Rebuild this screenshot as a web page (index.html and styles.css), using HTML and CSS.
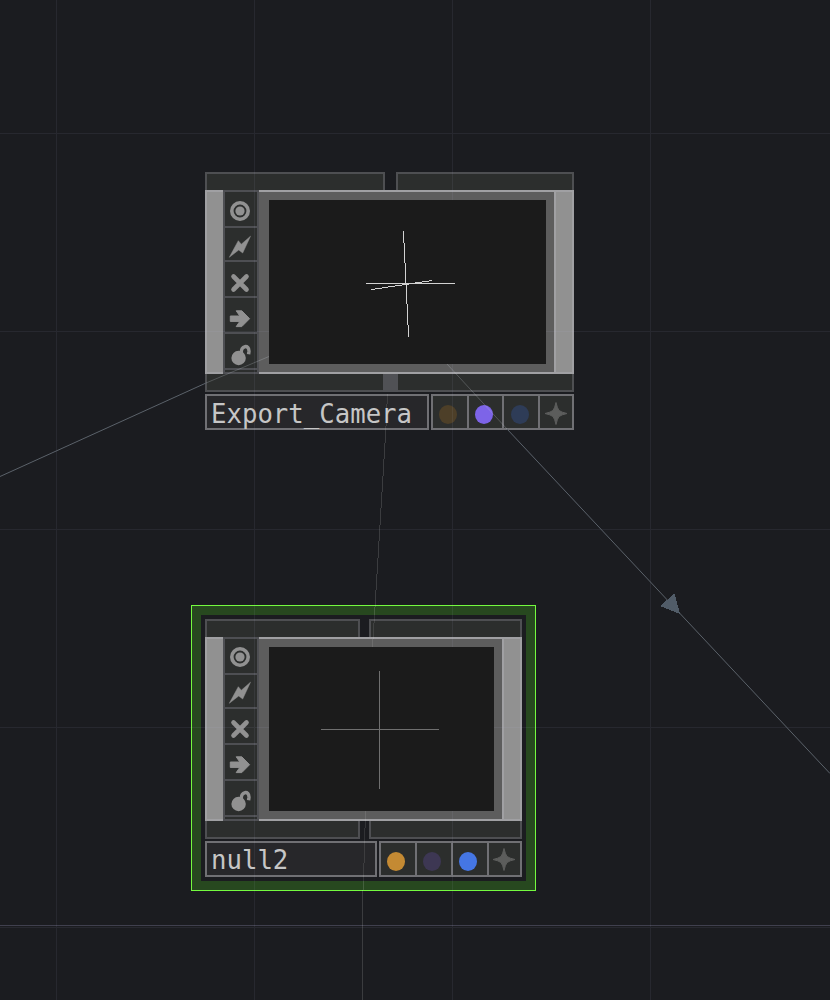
FILE: index.html
```html
<!DOCTYPE html>
<html lang="en">
<head>
<meta charset="utf-8">
<title>Network editor</title>
<link rel="stylesheet" href="styles.css">
</head>
<body>
<svg class="defs" width="0" height="0" aria-hidden="true">
  <symbol id="viewer" viewBox="0 0 32 34"><circle cx="15" cy="19" r="8.2" fill="none" stroke="currentColor" stroke-width="3.6"/><circle cx="15" cy="19" r="4.6" fill="currentColor"/></symbol>
  <symbol id="bolt" viewBox="0 0 32 32"><path d="M4.3 29.3 13.3 12.7 16.3 16.2 25.5 8.2 17.7 25 13.7 22Z" fill="currentColor" stroke="currentColor" stroke-width=".5" stroke-linejoin="round"/></symbol>
  <symbol id="cross" viewBox="0 0 32 34"><path d="M8.5 14.5 21.5 27.5M21.5 14.5 8.5 27.5" stroke="currentColor" stroke-width="4.6" stroke-linecap="round"/></symbol>
  <symbol id="arrow" viewBox="0 0 32 34"><path d="M5.3 18H14.8L11.2 12.8H16.8L24.6 20.7 16.8 28.6H11.2L14.8 23.4H5.3Z" fill="currentColor" stroke="currentColor" stroke-linejoin="round"/></symbol>
  <symbol id="unlock" viewBox="0 0 32 34"><circle cx="13.6" cy="24" r="7.2" fill="currentColor"/><path d="M16.4 19.5C15.2 11.2 24.4 10.4 24 17.2L23.6 20.2" fill="none" stroke="currentColor" stroke-width="3.5"/></symbol>
  <symbol id="star" viewBox="0 0 22 22"><path d="M11 0Q12.2 5.6 14 8Q16.5 9.8 22 11Q16.5 12.2 14 14Q12.2 16.4 11 22Q9.8 16.4 8 14Q5.5 12.2 0 11Q5.5 9.8 8 8Q9.8 5.6 11 0Z" fill="currentColor" stroke="currentColor" stroke-width="1"/></symbol>
</svg>
<main class="network">
  <section class="node node-camera">
    <div class="ports ports-in"><i></i><i></i></div>
    <div class="body">
      <div class="grip"></div>
      <div class="tools">
        <span><svg width="32" height="34"><use href="#viewer"/></svg></span>
        <span><svg width="32" height="32"><use href="#bolt"/></svg></span>
        <span><svg width="32" height="34"><use href="#cross"/></svg></span>
        <span><svg width="32" height="34"><use href="#arrow"/></svg></span>
        <span><svg width="32" height="34"><use href="#unlock"/></svg></span>
        <span></span>
      </div>
      <div class="frame"><svg class="screen" width="277" height="164"><path class="axis bright" d="M97 83.5H186M102.5 89.5 163.5 80.5M134.5 31V43M135.5 43V63M136.5 63V84M137.5 84V104M138.5 104V125M139.5 125V137"/></svg></div>
      <div class="grip grip-out"></div>
    </div>
    <div class="ports ports-out joined"><i></i><b></b><i></i></div>
    <div class="footer">
      <div class="name">Export_Camera</div>
      <div class="flags"><span><i class="dot brown"></i></span><span><i class="dot violet"></i></span><span><i class="dot navy"></i></span><span><svg class="star" width="22" height="23"><use href="#star"/></svg></span></div>
    </div>
  </section>

  <div class="selection">
    <section class="node node-null">
      <div class="ports ports-in"><i></i><i></i></div>
      <div class="body">
        <div class="grip"></div>
        <div class="tools raised">
          <span><svg width="32" height="34"><use href="#viewer"/></svg></span>
          <span><svg width="32" height="32"><use href="#bolt"/></svg></span>
          <span><svg width="32" height="34"><use href="#cross"/></svg></span>
          <span><svg width="32" height="34"><use href="#arrow"/></svg></span>
          <span><svg width="32" height="34"><use href="#unlock"/></svg></span>
          <span></span>
        </div>
        <div class="frame"><svg class="screen" width="225" height="164"><path class="axis" d="M52 82.5H170M110.5 24V142"/></svg></div>
        <div class="grip grip-out"></div>
      </div>
      <div class="ports ports-out"><i></i><i></i></div>
      <div class="footer raised">
        <div class="name">null2</div>
        <div class="flags"><span><i class="dot orange"></i></span><span><i class="dot plum"></i></span><span><i class="dot blue"></i></span><span><svg class="star" width="22" height="23"><use href="#star"/></svg></span></div>
      </div>
    </section>
  </div>

  <svg class="wires" width="830" height="1000" viewBox="0 0 830 1000">
    <path class="grid" d="M56.5 0V1000M254.5 0V1000M452.5 0V1000M650.5 0V1000M0 133.5H830M0 331.5H830M0 529.5H830M0 727.5H830M0 927.5H830"/>
    <path class="grid major" d="M0 925.5H830"/>
    <path class="cable" d="M385.8 430 374.5 615M363.5 881 362.5 900V1000"/>
    <path class="cable covered" d="M387.5 394 385.8 430M374.5 615 372.5 647M365.5 811 363.5 881"/>
    <path class="link" d="M0 476.5 206 383M507 429 830 773.5"/>
    <path class="link covered" d="M206 383 269 356.5M447 364 507 429"/>
    <path class="head" d="M674.5 593.5 680 614 660 606Z"/>
  </svg>
</main>
</body>
</html>
```
FILE: styles.css
```css
* { box-sizing: border-box; }
body { margin: 0; background: #1b1c20; }
.defs { position: absolute; }
.network { position: relative; width: 830px; height: 1000px; overflow: hidden; background: #1b1c20; }

/* Nodes sit freely on the network canvas */
.node-camera { position: absolute; left: 205px; top: 172px; width: 369px; }
.selection { position: absolute; left: 191px; top: 605px; width: 345px; height: 286px; padding: 13px; border: 1px solid #74fa3f; background: #1b1c20; box-shadow: inset 0 0 0 9px #27481f; }
.node-null { width: 317px; }

.ports { display: flex; justify-content: space-between; height: 18px; }
.ports i { border: 2px solid #4e4f52; background: #2c2e2d; }
.ports-in i { border-bottom: 0; }
.ports-out i { border-top: 0; }
.node-camera .ports i:first-child { width: 180px; }
.node-camera .ports i:last-child { width: 178px; }
.node-null .ports i:first-child { width: 155px; }
.node-null .ports i:last-child { width: 153px; }
.node-camera .ports.joined i:first-child { border-right: 0; width: 178px; }
.node-camera .ports.joined i:last-child { border-left: 0; width: 176px; }
.joined b { flex: 1; background: #505155; }

.body { display: flex; height: 184px; }
.grip { width: 18px; background: #919191; border: 2px solid #a0a0a3; border-right: 0; }
.grip-out { width: 20px; border-right: 2px solid #a0a0a3; }
.tools { display: grid; grid-template-rows: 34px 32px 34px 34px 34px 2px; gap: 2px; width: 36px; padding: 2px; background: #4e4f53; color: #919191; }
.tools span { background: #2c2e2d; }
.tools svg { display: block; }
.tools.raised svg { margin-top: -1px; }
.frame { flex: 1; padding: 8px 8px 8px 10px; border: solid #a0a0a3; border-width: 2px 0; background: #5d5d5d; }
.screen { display: block; position: relative; z-index: 2; background: #1b1b1b; }
.axis { fill: none; stroke: #6f6f6f; shape-rendering: crispEdges; }
.axis.bright { stroke: #d2d2d2; }

.footer { display: flex; gap: 2px; height: 36px; margin-top: 2px; }
.name { flex: 1; padding-left: 4px; border: 2px solid #707074; background: #27272a; color: #c6c6c6; font: 25.7px/36px "DejaVu Sans Mono", monospace; white-space: nowrap; }
.raised .name { line-height: 35px; }
.flags { display: grid; gap: 2px; width: 143px; padding: 2px; background: #707074; }
.node-camera .flags { grid-template-columns: 34px 33px 34px 32px; }
.node-null .flags { grid-template-columns: 34px 34px 34px 31px; }
.flags span { display: flex; align-items: center; justify-content: center; padding: 4px 4px 0 0; background: #2c2e2d; }
.node-camera .flags span:nth-child(3) { padding-right: 2px; }
.dot { width: 18px; height: 19px; border-radius: 50%; }
.brown { background: #4d3f28; }
.violet { background: #7d64e8; }
.navy { background: #2e3c57; }
.orange { background: #c48a33; }
.plum { background: #3d3753; }
.blue { background: #4576e4; }
.flags span:last-child { padding-right: 1px; }
.star { color: #5c5d5c; margin-top: -2px; }
.raised .star { margin-top: -4px; }

.wires { position: absolute; inset: 0; z-index: 1; pointer-events: none; }
.wires path { fill: none; shape-rendering: crispEdges; }
.wires .grid { stroke: rgba(195, 190, 225, .08); }
.wires .grid.major { stroke: rgba(185, 180, 225, .24); }
.wires .cable { stroke: rgba(255, 255, 255, .14); }
.wires .cable.covered { stroke: rgba(255, 255, 255, .1); }
.wires .link { stroke: #5b626a; shape-rendering: auto; }
.wires .link.covered { stroke: rgba(205, 215, 220, .24); }
.wires .head { fill: #515c68; }
```
